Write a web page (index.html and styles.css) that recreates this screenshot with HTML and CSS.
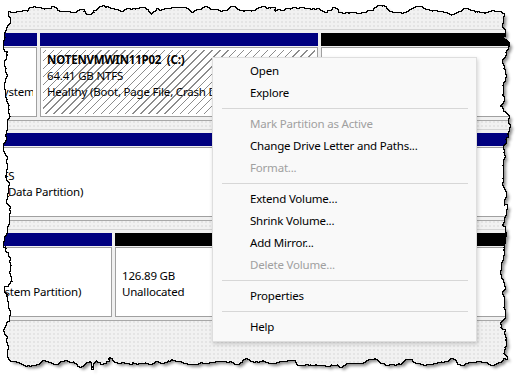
FILE: index.html
```html
<!DOCTYPE html>
<html lang="en">
<head>
    <meta charset="UTF-8">
    <title>Disk Management</title>
    <link rel="stylesheet" href="styles.css">
</head>
<body>
<div id="screen">
    <div id="map">
        <div class="disk disk-0">
            <div class="part sys-0">
                <div class="bar"></div>
                <div class="box">
                    <div class="txt">
                        <div class="line"></div>
                        <div class="line">100 MB</div>
                        <div class="line">Healthy (EFI System Partition)</div>
                    </div>
                </div>
            </div>
            <div class="part os-0">
                <div class="bar"></div>
                <div class="box selected">
                    <div class="txt">
                        <div class="line label">NOTENVMWIN11P02  (C:)</div>
                        <div class="line">64.41 GB NTFS</div>
                        <div class="line">Healthy (Boot, Page File, Crash Dump, Basic Data Partition)</div>
                    </div>
                </div>
            </div>
            <div class="part free-0">
                <div class="bar black"></div>
                <div class="box">
                    <div class="txt">
                        <div class="line"></div>
                        <div class="line"></div>
                        <div class="line"></div>
                    </div>
                </div>
            </div>
        </div>

        <div class="disk disk-1">
            <div class="part data-1">
                <div class="bar"></div>
                <div class="box">
                    <div class="txt">
                        <div class="line label">DATA (D:)</div>
                        <div class="line">126.00 GB NTFS</div>
                        <div class="line">Healthy (Basic Data Partition)</div>
                    </div>
                </div>
            </div>
        </div>

        <div class="disk disk-2">
            <div class="part sys-2">
                <div class="bar"></div>
                <div class="box">
                    <div class="txt">
                        <div class="line"></div>
                        <div class="line">100 MB</div>
                        <div class="line">Healthy (EFI System Partition)</div>
                    </div>
                </div>
            </div>
            <div class="part free-2">
                <div class="bar black"></div>
                <div class="box">
                    <div class="txt">
                        <div class="line"></div>
                        <div class="line">126.89 GB</div>
                        <div class="line">Unallocated</div>
                    </div>
                </div>
            </div>
        </div>
    </div>

    <ul id="menu">
        <li>Open</li>
        <li>Explore</li>
        <li class="sep"></li>
        <li class="off">Mark Partition as Active</li>
        <li>Change Drive Letter and Paths...</li>
        <li class="off">Format...</li>
        <li class="sep"></li>
        <li>Extend Volume...</li>
        <li>Shrink Volume...</li>
        <li>Add Mirror...</li>
        <li class="off">Delete Volume...</li>
        <li class="sep"></li>
        <li>Properties</li>
        <li class="sep"></li>
        <li>Help</li>
    </ul>

    <!-- torn paper edge with drop shadow -->
    <svg id="torn" width="520" height="382" viewBox="0 0 520 382">
        <filter id="rip" filterUnits="userSpaceOnUse" x="0" y="0" width="520" height="382" color-interpolation-filters="sRGB">
            <feTurbulence type="fractalNoise" baseFrequency="0.05" numOctaves="5" seed="7" result="noise"/>
            <feDisplacementMap in="SourceGraphic" in2="noise" scale="16" xChannelSelector="R" yChannelSelector="G" result="paper"/>
            <feMorphology in="paper" operator="dilate" radius="1" result="fat"/>
            <feComposite in="fat" in2="paper" operator="out" result="ring"/>
            <feOffset in="paper" dx="3" dy="3" result="off"/>
            <feGaussianBlur in="off" stdDeviation="1.6" result="blur"/>
            <feFlood flood-color="#000" flood-opacity="0.45"/>
            <feComposite in2="blur" operator="in" result="shade"/>
            <feComposite in="shade" in2="paper" operator="out" result="shadow"/>
            <feFlood flood-color="#fff"/>
            <feComposite in2="paper" operator="out" result="outside"/>
            <feMerge>
                <feMergeNode in="outside"/>
                <feMergeNode in="shadow"/>
                <feMergeNode in="ring"/>
            </feMerge>
        </filter>
        <rect x="8" y="11" width="496" height="351" fill="#000" filter="url(#rip)"/>
    </svg>
</div>
</body>
</html>
```

FILE: styles.css
```css
*{
    margin: 0;
    padding: 0;
    box-sizing: border-box;
}
ul{
    list-style: none;
}
body{
    background: #fff;
    overflow: hidden;
}
#screen{
    position: relative;
    width: 520px;
    height: 382px;
    overflow: hidden;
    background-color: #f1f1f1;
    background-image: radial-gradient(#e3e3e3 0.7px, transparent 0.9px);
    background-size: 4px 4px;
    font-family: "Noto Sans", "Liberation Sans", sans-serif;
    font-size: 11.5px;
    letter-spacing: -0.2px;
    color: #000;
}
#map{
    display: flex;
    flex-direction: column;
    gap: 8px;
    padding-top: 29px;
}
.disk{
    display: flex;
    gap: 3px;
    padding: 3px 0;
    border-top: 1px solid #d4d4d4;
    border-bottom: 1px solid #a8a8a8;
    background: #f0f0f0;
}
.part{
    display: flex;
    flex-direction: column;
    gap: 1px;
    flex-shrink: 0;
}
.bar{
    height: 13px;
    background: #000080;
}
.bar.black{
    background: #000;
}
.box{
    height: 70px;
    border: 1px solid #a0a0a0;
    box-shadow: inset 0 0 0 2px #fff;
    background: #fff;
    padding: 4px 3px 0 6px;
}
.box.selected{
    background: repeating-linear-gradient(135deg, #fff 0 4.6px, #8c8c8c 4.6px 5.6px);
}
.txt{
    overflow: hidden;
}
.line{
    height: 16px;
    line-height: 16px;
    white-space: pre;
}
.label{
    font-weight: bold;
}

.disk-0{
    margin-left: -75px;
}
.sys-0{
    width: 112px;
}
.os-0{
    width: 278px;
}
.free-0{
    width: 300px;
}
.disk-1{
    margin-left: -75px;
}
.data-1{
    width: 700px;
}
.disk-2{
    margin-left: -79px;
}
.sys-2{
    width: 191px;
}
.free-2{
    width: 500px;
}

#menu{
    position: absolute;
    left: 212px;
    top: 57px;
    width: 265px;
    padding: 2px 0 3px;
    background: #f9f9f9;
    border: 1px solid #dedede;
    box-shadow: 1px 2px 4px rgba(0,0,0,0.18);
}
#menu li{
    height: 22px;
    line-height: 22px;
    padding-left: 37px;
    white-space: nowrap;
}
#menu li.off{
    color: #a0a0a0;
}
#menu li.sep{
    height: 1px;
    margin: 4px 8px 4px 9px;
    background: #d7d7d7;
}
#torn{
    position: absolute;
    left: 0;
    top: 0;
    pointer-events: none;
}
```
